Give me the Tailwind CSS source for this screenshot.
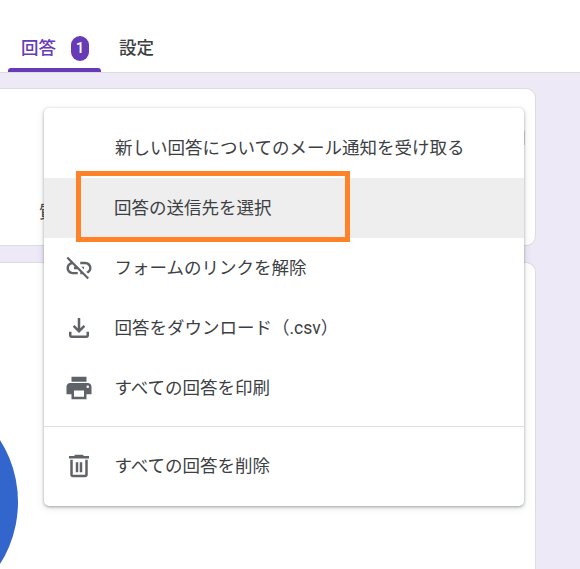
<!DOCTYPE html>
<html lang="ja">
<head>
    <meta charset="UTF-8">
    <script src="https://cdn.jsdelivr.net/npm/@tailwindcss/browser@4"></script>
    <title>回答</title>
</head>
<body class="relative h-[569px] overflow-hidden bg-[#ede9f7] font-['Roboto','Noto_Sans_CJK_JP',sans-serif]">
    <!-- Tabs -->
    <header class="flex h-[73px] items-end border-b border-[#dadce0] bg-white pl-2">
        <div class="flex h-[72px] w-[93px] flex-col">
            <div class="flex flex-1 items-center gap-[15px] pl-[13px] pt-[28px]">
                <span class="text-[17.5px] font-medium text-[#673ab7]">回答</span>
                <span class="flex h-[25px] w-[18px] items-center justify-center rounded-[9px] bg-[#673ab7] text-[15px] font-medium text-white">1</span>
            </div>
            <div class="h-[4px] rounded-t-[3px] bg-[#673ab7]"></div>
        </div>
        <div class="flex h-[72px] items-center pl-[18px] pt-[24px] text-[17.5px] font-medium text-[#3c4043]">設定</div>
    </header>

    <!-- Cards behind the menu -->
    <main class="-ml-[20px] mr-[44px] flex flex-col gap-[16px] pt-[15px]">
        <section class="relative h-[158px] rounded-[10px] border border-[#dadce0] bg-white pl-[58px] pt-[110px] text-[17.5px] text-[#3c4043]">質問</section>
        <section class="relative h-[307px] overflow-hidden rounded-t-[10px] border border-b-0 border-[#dadce0] bg-white">
            <div class="absolute left-[-195px] top-[123px] h-[232px] w-[232px] rounded-full bg-[#3366cc]"></div>
        </section>
    </main>

    <!-- Menu -->
    <div class="absolute left-[44px] top-[108px] w-[480px] rounded-[5px] bg-white pt-[10px] pb-[10px] text-[17.5px] text-[#3c4043] shadow-[0_1px_3px_rgba(60,64,67,0.45),0_2px_8px_rgba(60,64,67,0.12)]">
        <div class="flex h-[60px] items-center pl-[71px]">新しい回答についてのメール通知を受け取る</div>
        <div class="flex h-[60px] items-center bg-[#eeeeee] pl-[70px]">回答の送信先を選択</div>
        <div class="flex h-[60px] items-center gap-[20.5px] pl-[20px]">
            <svg class="h-[30px] w-[30px] fill-[#5f6368]" viewBox="0 0 24 24"><path d="M17 7h-4v1.9h4c1.71 0 3.1 1.39 3.1 3.1 0 1.43-.98 2.63-2.31 2.98l1.46 1.46C20.88 15.61 22 13.95 22 12c0-2.76-2.24-5-5-5zm-1 4h-2.19l2 2H16zM2 4.27l3.11 3.11C3.29 8.12 2 9.91 2 12c0 2.76 2.24 5 5 5h4v-1.9H7c-1.71 0-3.1-1.39-3.1-3.1 0-1.59 1.21-2.9 2.76-3.07L8.73 11H8v2h2.73L13 15.27V17h1.73l4.01 4L20 19.74 3.27 3 2 4.27z"/></svg>
            <span>フォームのリンクを解除</span>
        </div>
        <div class="flex h-[60px] items-center gap-[20.5px] pl-[20px]">
            <svg class="h-[30px] w-[30px] fill-[#5f6368]" viewBox="0 0 24 24"><path d="M18 15v3H6v-3H4v3c0 1.1.9 2 2 2h12c1.1 0 2-.9 2-2v-3h-2zm-1-4l-1.41-1.41L13 12.17V4h-2v8.17L8.41 9.59 7 11l5 5 5-5z"/></svg>
            <span>回答をダウンロード（.csv）</span>
        </div>
        <div class="flex h-[60px] items-center gap-[20.5px] pl-[20px]">
            <svg class="h-[30px] w-[30px] fill-[#5f6368]" viewBox="0 0 24 24"><path d="M19 8H5c-1.66 0-3 1.34-3 3v6h4v4h12v-4h4v-6c0-1.66-1.34-3-3-3zm-3 11H8v-5h8v5zm3-7c-.55 0-1-.45-1-1s.45-1 1-1 1 .45 1 1-.45 1-1 1zm-1-9H6v4h12V3z"/></svg>
            <span>すべての回答を印刷</span>
        </div>
        <div class="mt-[8px] mb-[9px] border-t border-[#e0e0e0]"></div>
        <div class="flex h-[60px] items-center gap-[20.5px] pl-[20px]">
            <svg class="h-[30px] w-[30px] fill-[#5f6368]" viewBox="0 0 24 24"><path d="M9 3h6l1 1h4v2H4V4h4zM5 7h2v12h10V7h2v12c0 1.1-.9 2-2 2H7c-1.1 0-2-.9-2-2zM9.4 9h2v8h-2zM12.6 9h2v8h-2z"/></svg>
            <span>すべての回答を削除</span>
        </div>
    </div>

    <!-- Something from the card shows at the menu's edge -->
    <div class="absolute left-[524px] top-[131px] h-[14px] w-[1px] bg-[#9aa0a6]/60"></div>

    <!-- Annotation box -->
    <div class="absolute left-[76px] top-[171px] h-[71px] w-[274px] border-[5px] border-[#ff8228]"></div>
</body>
</html>
